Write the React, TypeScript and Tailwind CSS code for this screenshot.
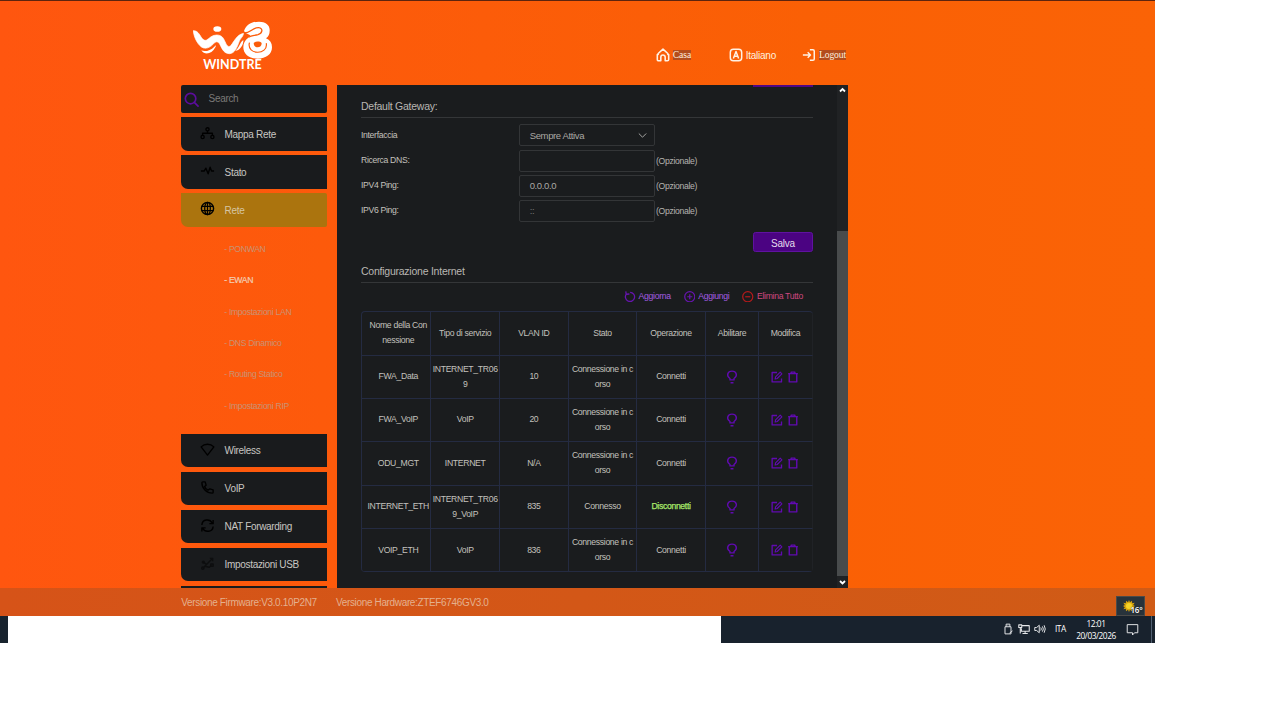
import type { ReactNode } from "react";

type Row = {
  name: string;
  service: string[];
  vlan: string;
  status: string[];
  action: string;
};

const rows: Row[] = [
  { name: "FWA_Data", service: ["INTERNET_TR06", "9"], vlan: "10", status: ["Connessione in c", "orso"], action: "Connetti" },
  { name: "FWA_VoIP", service: ["VoIP"], vlan: "20", status: ["Connessione in c", "orso"], action: "Connetti" },
  { name: "ODU_MGT", service: ["INTERNET"], vlan: "N/A", status: ["Connessione in c", "orso"], action: "Connetti" },
  { name: "INTERNET_ETH", service: ["INTERNET_TR06", "9_VoIP"], vlan: "835", status: ["Connesso"], action: "Disconnetti" },
  { name: "VOIP_ETH", service: ["VoIP"], vlan: "836", status: ["Connessione in c", "orso"], action: "Connetti" },
];

const subItems = ["PONWAN", "EWAN", "Impostazioni LAN", "DNS Dinamico", "Routing Statico", "Impostazioni RIP"];

function Logo() {
  return (
    <div className="flex w-[80px] flex-col">
      <svg viewBox="68 61 240 117" className="h-[39px] w-[80px]" fill="none" strokeLinecap="round">
        <ellipse cx="141" cy="85" rx="12" ry="8.5" fill="#fff" />
        <path
          d="M69 91C77 88 84 95 91 107C97 117 103 121 109 118C118 113 124 103 139 103C157 103 160 115 167 129C171 137 176 140 181 135C193 121 199 102 220 98C217 110 211 112 207 121C200 141 193 158 178 159C162 159 157 148 149 132C144 122 137 121 131 128C121 139 112 144 100 142C84 138 70 109 69 91Z"
          fill="#fff"
          stroke="#fff"
          strokeWidth="2"
        />
        <path d="M93 149C102 154 120 151 132 138C137 133 138 134 135 140C124 161 103 165 93 149Z" fill="#fff" />
        <path d="M195 150C207 142 208 125 219 118C220 132 209 150 195 150Z" fill="#fff" />
        {/* solid "3", then the cut-out lines over it */}
        <path
          d="M221 91C228 72 243 63 266 63C286 63 299 73 298 90C298 101 294 107 287 113C299 118 305 127 305 140C305 161 287 174 262 174C237 174 219 161 219 140C219 127 224 119 233 112L240 104L226 97Z"
          fill="#fff"
        />
        <path d="M222 97C241 97 247 80 265 81C280 83 276 98 263 102C252 105 243 104 236 109" stroke="#fb5c0a" strokeWidth="4" />
        <path d="M237 127C229 163 293 164 288 129" stroke="#fb5c0a" strokeWidth="3.5" />
        <path d="M250 127C257 121 269 122 274 127C274 136 269 140 262 140C255 140 250 135 250 127Z" fill="#fb5c0a" />
      </svg>
      <div className="-mt-[0.3px] ml-[10.5px] font-[Lato,sans-serif] text-[12.5px] leading-[12px] font-bold tracking-[0.02px] whitespace-nowrap text-white">WINDTRE</div>
    </div>
  );
}

function Icon({ children, size = "size-[14px]", color = "text-black", width = 1.5 }: { children: ReactNode; size?: string; color?: string; width?: number }) {
  return (
    <svg viewBox="0 0 16 16" className={`${size} ${color} shrink-0`} fill="none" stroke="currentColor" strokeWidth={width} strokeLinejoin="round">
      {children}
    </svg>
  );
}

function MenuItem({ label, icon, active = false }: { label: string; icon: ReactNode; active?: boolean }) {
  return (
    <div className={`flex h-[33.4px] shrink-0 items-center rounded-bl-[7px] pl-[19px] text-[10px] tracking-[-0.32px] ${active ? "rounded-r-[2px] bg-[#ab740e] text-[#d6c6a3]" : "bg-[#191b1d] text-[#c8c6c2]"}`}>
      <div className="-mt-[2.5px] w-[24.3px]">
        <Icon size="size-[15px]">{icon}</Icon>
      </div>
      <span className="pt-[0.5px]">{label}</span>
    </div>
  );
}

function Sidebar() {
  return (
    <nav className="flex w-[146px] shrink-0 flex-col gap-[4.6px] overflow-hidden">
      <div className="flex h-[28px] shrink-0 items-center rounded-[2px] bg-[#191b1d] pl-[3px] text-[10px] tracking-[-0.32px] text-[#7b7a78]">
        <Icon size="mt-[2px] size-[15px]" color="text-[#5c0d9c]" width={1.8}>
          <circle cx="7" cy="7" r="5.6" />
          <path d="M11 11l4 4" strokeLinecap="round" />
        </Icon>
        <span className="ml-[9.3px]">Search</span>
      </div>
      <MenuItem
        label="Mappa Rete"
        icon={
          <>
            <circle cx="8" cy="4.6" r="1.7" />
            <circle cx="2.8" cy="12.8" r="1.7" />
            <circle cx="13.2" cy="12.8" r="1.7" />
            <path d="M8 6.3v2.5M2.8 11V8.8h10.4V11" />
          </>
        }
      />
      <MenuItem label="Stato" icon={<path d="M1 8.5h3.6l1.7-3 2.4 6 2.1-7 1.5 4H15" />} />
      <MenuItem
        active
        label="Rete"
        icon={
          <>
            <circle cx="8" cy="8" r="6.5" />
            <ellipse cx="8" cy="8" rx="3" ry="6.5" strokeWidth="1.3" />
            <path d="M8 1.5v13M2 5.7h12M2 10.3h12" strokeWidth="1.3" />
          </>
        }
      />
      <ul className="-mt-[1px] flex h-[199px] shrink-0 flex-col pt-[3.5px] pl-[43px] text-[8.67px] tracking-[-0.34px] text-[#c99273]">
        {subItems.map((item) => (
          <li key={item} className={`flex h-[31.4px] items-center ${item === "EWAN" ? "text-[#f3cdb4] [-webkit-text-stroke:0.2px]" : ""}`}>
            - {item}
          </li>
        ))}
      </ul>
      <MenuItem label="Wireless" icon={<path d="M1.2 5.2C5 1.4 11 1.4 14.8 5.2L8 14z" />} />
      <MenuItem label="VoIP" icon={<path d="M3 2h2.5l1 3.5-1.6 1.4c.6 1.8 1.9 3.1 3.7 3.8L10.5 9.500l3.500 1v2.500c0 .7-.5 1-1 1C7 14 2 9 2 3c0-.5.4-1 1-1z" />} />
      <MenuItem
        label="NAT Forwarding"
        icon={<path d="M2 7.5C2.300 1 10.500.5 13 5.300M14 2v4h-4M14 9c-.3 6-8.500 6.800-11 2.200M2 14.500v-4h4" />}
      />
      <MenuItem
        label="Impostazioni USB"
        icon={
          <g stroke="#0d0e0f">
            <path d="M3 13L13 3M7 9L3.5 6.5M5 11l5 1 2-2" />
            <circle cx="3" cy="13" r="1.2" />
            <circle cx="3.5" cy="6.5" r="1" />
            <path d="M10.5 2.5h3v3M11.5 8.5h2.500v2.500h-2.500z" />
          </g>
        }
      />
      <div className="h-[34px] shrink-0 bg-[#191b1d]" />
    </nav>
  );
}

function Field({ label, value = "", select = false, dim = false }: { label: string; value?: string; select?: boolean; dim?: boolean }) {
  return (
    <div className="flex h-[25.1px] items-start">
      <div className={`w-[158px] text-[8.67px] tracking-[-0.33px] text-[#c3c1bd] ${select ? "pt-[4.5px]" : "pt-[4.3px]"}`}>{label}</div>
      <div className="flex h-[22px] w-[136px] items-center justify-between rounded-[2px] border border-[#333537] pt-[0.5px] pr-[6.5px] pl-[9.7px] text-[9.5px] tracking-[-0.36px]">
        <span className={dim ? "text-[#77777a]" : "text-[#aaa8a4]"}>{value}</span>
        {select && (
          <svg viewBox="0 0 9 9" className="size-[9px]" fill="none" stroke="#a5a5a3" strokeWidth="1">
            <path d="M.8 2.5l3.700 3.700L8.200 2.500" />
          </svg>
        )}
      </div>
      {!select && <div className="ml-[1px] pt-[5px] text-[8.67px] tracking-[-0.33px] text-[#b5b3af]">(Opzionale)</div>}
    </div>
  );
}

function Cell({ children, className = "" }: { children: ReactNode; className?: string }) {
  return <div className={`flex flex-col items-center justify-center border-r border-b border-[#242b42] leading-[15.3px] whitespace-nowrap ${className}`}>{children}</div>;
}

function Lines({ text }: { text: string[] }) {
  return text.map((line) => <div key={line}>{line}</div>);
}

function ConnectionTable() {
  return (
    <div className="mt-[9px] -ml-[0.3px] w-[452px] shrink-0 overflow-hidden rounded-[4px] border border-r-0 border-b-0 border-[#242b42] text-[8.67px] tracking-[-0.33px] text-[#c3c1bd]">
      {/* header and body share the same column template */}
      <div className="grid auto-rows-[43.35px] grid-cols-[69.700px_68.600px_68.800px_68.500px_68.500px_53.500px_53.400px]">
        <Cell className="pl-[4.500px]"><Lines text={["Nome della Con", "nessione"]} /></Cell>
        <Cell>Tipo di servizio</Cell>
        <Cell>VLAN ID</Cell>
        <Cell>Stato</Cell>
        <Cell>Operazione</Cell>
        <Cell>Abilitare</Cell>
        <Cell className="border-r-[#202226]">Modifica</Cell>
        {rows.map((row) => (
          <TableRow key={row.name} row={row} />
        ))}
      </div>
    </div>
  );
}

function TableRow({ row }: { row: Row }) {
  return (
    <>
      <Cell className="pl-[4.500px]">{row.name}</Cell>
      <Cell><Lines text={row.service} /></Cell>
      <Cell>{row.vlan}</Cell>
      <Cell><Lines text={row.status} /></Cell>
      <Cell className={row.action === "Disconnetti" ? "text-[#a8e86a] [-webkit-text-stroke:0.25px]" : ""}>{row.action}</Cell>
      <Cell>
        <Icon size="size-[14px]" color="text-[#600ab0]" width={1.6}>
          <path d="M5.700 11.300V9.700C1 6.600 3 1.300 8 1.300s7 5.300 2.300 8.400v1.600zM6.300 14.500h3.400" />
        </Icon>
      </Cell>
      <Cell className="border-r-[#202226]">
        <div className="flex gap-[4px]">
          <Icon size="size-[12px]" color="text-[#600ab0]" width={1.8}>
            <path d="M8 2H1.500v12.500H14V10" />
            <path d="M5.500 10.700l.6-3L12.300 1.500l2.200 2.200-6.200 6.300z" strokeWidth="1.5" />
          </Icon>
          <Icon size="size-[12px]" color="text-[#600ab0]" width={1.9}>
            <path d="M1.500 3.500h13M5.500 3V1.500h5V3M3 3.500v11h10v-11" />
          </Icon>
        </div>
      </Cell>
    </>
  );
}

function Panel() {
  return (
    <main className="ml-[9.7px] flex w-[511.3px] overflow-hidden bg-[#1a1c1e]">
      <div className="flex w-[500.3px] flex-col pl-[24px]">
        <div className="ml-[392px] h-[2.5px] w-[60px] shrink-0 bg-[#500685]" />
        <h2 className="flex h-[31px] w-[452px] shrink-0 items-end border-b border-[#343638] pb-[2.5px] text-[10.5px] tracking-[-0.26px] text-[#b9b7b3]">Default Gateway:</h2>
        <div className="mt-[6.3px] h-[107.8px] shrink-0">
          <Field label="Interfaccia" value="Sempre Attiva" select />
          <Field label="Ricerca DNS:" />
          <Field label="IPV4 Ping:" value="0.0.0.0" />
          <Field label="IPV6 Ping:" value="::" dim />
        </div>
        <button className="ml-[391.8px] flex h-[20px] w-[60.2px] shrink-0 items-center justify-center rounded-[2.5px] border border-[#5f12a0] bg-[#4b0382] pt-[2px] text-[10px] tracking-[-0.25px] text-[#e5dcec]">
          Salva
        </button>
        <h2 className="flex h-[31px] w-[452px] shrink-0 items-end border-b border-[#343638] pb-[3px] text-[10.5px] tracking-[-0.24px] text-[#b9b7b3]">Configurazione Internet</h2>
        <div className="mt-[7px] flex h-[12px] w-[442px] shrink-0 items-center justify-end gap-[13px] text-[8.67px] tracking-[-0.31px] text-[#a45ce0]">
          <span className="flex items-center gap-[3px]">
            <Icon size="size-[11.5px]" color="text-[#6714b0]" width={1.8}>
              <path d="M3.500 4a6.400 6.400 0 1 0 5-2.200M2.500.5L3 4.500l4.500-.3" />
            </Icon>
            Aggiorna
          </span>
          <span className="flex items-center gap-[3px]">
            <Icon size="size-[11.5px]" color="text-[#6714b0]" width={1.7}>
              <circle cx="8" cy="8" r="7" />
              <path d="M8 4.500v7M4.500 8h7" />
            </Icon>
            Aggiungi
          </span>
          <span className="flex items-center gap-[3px] text-[#ce477f]">
            <Icon size="size-[11.5px]" color="text-[#b41a1b]" width={1.7}>
              <circle cx="8" cy="8" r="7" />
              <path d="M4.500 8h7" />
            </Icon>
            Elimina Tutto
          </span>
        </div>
        <ConnectionTable />
      </div>
      <div className="flex w-[11px] flex-col items-center bg-[#202224]">
        <svg viewBox="0 0 11 11" className="h-[11px] w-[11px] shrink-0" fill="none" stroke="#fff" strokeWidth="1.8">
          <path d="M3 6.500l2.500-2.500L8 6.500" />
        </svg>
        <div className="mt-[135px] h-[345.5px] w-full shrink-0 bg-[#484b4c]" />
        <svg viewBox="0 0 11 11" className="h-[11px] w-[11px] shrink-0" fill="none" stroke="#fff" strokeWidth="1.8">
          <path d="M3 5l2.500 2.500L8 5" />
        </svg>
      </div>
    </main>
  );
}

function Header() {
  return (
    <header className="flex h-[83.7px] shrink-0 items-start pl-[192.7px]">
      <div className="mt-[19.7px]">
        <Logo />
      </div>
      <div className="mt-[46px] ml-[383px] flex h-[16px] items-center text-[10px] tracking-[-0.26px] text-[#fff0df]">
        <div className="flex w-[73.1px] items-center gap-[3px]">
          <Icon size="size-[14px]" color="text-[#fff1e4]" width={1.8}>
            <path d="M2.500 6.300L8 1.300l5.500 5v1.200h1v5.500q0 1.500-1.500 1.500h-2.500v-4a2 2 0 0 0-5 0v4H3q-1.500 0-1.500-1.500V7.500h1z" />
          </Icon>
          <span className="bg-[#b34c1c] font-['Liberation_Serif',serif] text-[9.6px] leading-[10.5px] tracking-[-0.05px]">Casa</span>
        </div>
        <div className="flex w-[73.2px] items-center gap-[3px]">
          <Icon size="size-[14px]" color="text-[#fff1e4]" width={1.7}>
            <rect x="1.5" y="1.5" width="13" height="13" rx="3.5" />
            <path d="M5 12l3-8 3 8M6 9.500h4" />
          </Icon>
          <span>Italiano</span>
        </div>
        <div className="flex items-center gap-[3px]">
          <Icon size="size-[14px]" color="text-[#fff1e4]" width={1.7}>
            <path d="M1 8h8.500M6.500 4.800L9.700 8l-3.200 3.200M9 2h3.500Q14 2 14 3.500v9q0 1.500-1.500 1.500H9" />
          </Icon>
          <span className="bg-[#b34c1c] font-['Liberation_Serif',serif] text-[9.6px] leading-[10.5px] tracking-[-0.1px]">Logout</span>
        </div>
      </div>
    </header>
  );
}

function Footer() {
  return (
    <footer className="flex h-[28px] shrink-0 items-center justify-between bg-[linear-gradient(90deg,#d65318,#d05b16)] pr-[10.5px] pl-[181.3px] text-[10px] tracking-[-0.35px] text-[#e4b08e]">
      <div className="flex pt-[1px]">
        <span className="w-[154.7px]">Versione Firmware:V3.0.10P2N7</span>
        <span>Versione Hardware:ZTEF6746GV3.0</span>
      </div>
      <div className="flex h-[20px] w-[29px] items-center self-end border border-[#4b4a48] bg-[#28333b] pl-[6px] font-['Open_Sans',sans-serif] text-[8px] tracking-[-0.2px] text-white">
        <svg viewBox="0 0 16 16" className="mb-px size-[12px] shrink-0">
          <path
            d="M8 0l1.300 3L12 1l.2 3.300 3.300-.5L13.500 6.500 16 8l-2.500 1.500 2 2.700-3.300-.5L12 15l-2.700-2L8 16l-1.300-3L4 15l-.2-3.300-3.300.5 2-2.700L0 8l2.500-1.500-2-2.700 3.300.5L4 1l2.700 2z"
            fill="#d9a50c"
          />
          <circle cx="8" cy="8" r="4" fill="#f5d428" />
        </svg>
        <span className="relative -ml-[4px] pt-[8px] font-semibold whitespace-nowrap [text-shadow:0_0_2px_#222]">16°</span>
      </div>
    </footer>
  );
}

function Taskbar() {
  return (
    <div className="flex h-[26.5px] shrink-0">
      <div className="w-[8px] bg-[#18232e]" />
      <div className="w-[713px] bg-white" />
      <div className="flex flex-1 items-center justify-end bg-[#18222d] font-['Open_Sans',sans-serif] text-[8.3px] tracking-[-0.45px] text-white">
        <div className="flex items-center gap-[4px]">
          <Icon size="size-[12px]" color="text-[#e4e6e8]" width={1.3}>
            <path d="M5.500 5V1.500h5V5M4 5h8v9.500H4zM7 3h.5M9 3h.5M10 13.500l4-3" />
          </Icon>
          <Icon size="size-[12px]" color="text-[#e4e6e8]" width={1.4}>
            <path d="M5 3.500h10v7.500H4.500V7M9.500 11v3M6 14h7M1 2.500h4V6H1zM3 6v8" />
          </Icon>
          <Icon size="size-[12px]" color="text-[#e4e6e8]" width={1.3}>
            <path d="M1 6h2.500L7 3v10L3.500 10H1zM9 6q1.500 2 0 4M11.200 4.500q2.500 3.500 0 7M13.500 3q3 5 0 10" />
          </Icon>
        </div>
        <span className="ml-[9px] w-[21px]">ITA</span>
        <div className="flex w-[40px] flex-col items-center pt-[0.5px] leading-[12px] whitespace-nowrap">
          <div>12:01</div>
          <div>20/03/2026</div>
        </div>
        <div className="mr-[12px] ml-[10px] flex">
          <Icon size="size-[13px]" color="text-[#e4e6e8]" width={1.2}>
            <path d="M1.500 2h13v10h-4L8 14.800V12H1.500z" />
          </Icon>
        </div>
        <div className="h-full w-[4px] border-l border-[#526071]" />
      </div>
    </div>
  );
}

export default function App() {
  return (
    <div className="h-[720px] w-[1280px] overflow-hidden bg-white font-['Liberation_Sans',Arial,sans-serif]">
      <div className="flex h-[642.5px] w-[1155px] flex-col">
        <div className="flex h-[588px] shrink-0 flex-col border-t border-[#5d240e] bg-[linear-gradient(90deg,#ff560f,#fa6005_70%,#fa6306)]">
          <Header />
          <div className="flex min-h-0 flex-1 pl-[181.3px]">
            <Sidebar />
            <Panel />
          </div>
        </div>
        <Footer />
        <Taskbar />
      </div>
    </div>
  );
}
